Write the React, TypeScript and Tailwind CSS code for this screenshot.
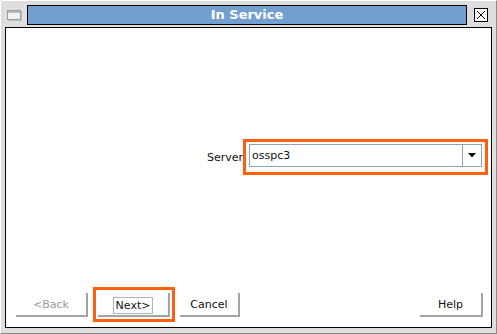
import React from 'react';

const font = { fontFamily: '"DejaVu Sans", sans-serif' };

const WinIcon: React.FC = () => (
  <svg width="15" height="11" viewBox="0 0 15 11">
    <rect x="0.5" y="0.5" width="13" height="9" fill="#f2f2f2" stroke="#9a9a9a" />
    <rect x="1" y="1" width="12" height="2" fill="#b8b8b8" />
    <rect x="1" y="10" width="14" height="1" fill="#c4c4c4" />
    <rect x="14" y="1" width="1" height="10" fill="#c4c4c4" />
  </svg>
);

const Button: React.FC<{ label: string; w: string; disabled?: boolean; focused?: boolean }> = ({ label, w, disabled, focused }) => (
  <div className={`${w} h-[24px] flex items-center justify-center pt-[4px] bg-white border-r-2 border-b-2 border-[#a4a4a4] text-[11px] ${disabled ? 'text-[#9a9a9a]' : 'text-[#111]'}`}>
    {focused ? <span className="px-[2px] leading-[15px] border border-[#a9b6c8]">{label}</span> : label}
  </div>
);

export default function App() {
  return (
    <div style={font} className="w-[497px] h-[334px] bg-[#dedede] border-l border-t border-l-white border-t-white border-r border-b border-r-[#8a8a8a] border-b-[#8a8a8a] flex flex-col overflow-hidden">
      {/* title row */}
      <div className="flex items-center h-[20px] mt-[4px] pl-[6px] pr-[8px]">
        <WinIcon />
        <div className="flex-1 h-[20px] ml-[5px] bg-[#729fcf] border border-black flex items-center justify-center text-white font-bold text-[13px]">
          In Service
        </div>
        <div className="ml-[7px] w-[14px] h-[14px] bg-white border border-black flex items-center justify-center">
          <svg width="10" height="10" viewBox="0 0 10 10">
            <path d="M1 1L9 9M9 1L1 9" stroke="black" strokeWidth="1" />
          </svg>
        </div>
      </div>

      {/* content */}
      <div className="ml-[4px] mt-[2px] w-[487px] h-[301px] bg-white border border-black flex flex-col">
        <div className="flex items-center justify-end pr-[3px] mt-[111px]">
          <span className="text-[11px] text-[#111] pt-[2px]">Server</span>
          <div className="w-[245px] h-[36px] border-[3px] border-[#ff5f0f] px-[3px] pt-[2px]">
            <div className="h-[23px] border border-[#8fa2b6] flex">
              <div className="flex-1 flex items-center pl-[2px] pt-[1px] text-[11px] text-[#111]">osspc3</div>
              <div className="w-[19px] border-l border-[#8fa2b6] flex items-center justify-center">
                <svg width="8" height="5" viewBox="0 0 8 5">
                  <path d="M0 0H8L4 4.5Z" fill="black" />
                </svg>
              </div>
            </div>
          </div>
        </div>

        <div className="flex-1" />

        <div className="flex items-center pl-[10px] pr-[8px] pb-[5px]">
          <Button label="<Back" w="w-[72px]" disabled />
          <div className="ml-[5px] w-[82px] h-[35px] border-[3px] border-[#ff5f0f] px-[2px] flex items-center">
            <Button label="Next>" w="w-[72px]" focused />
          </div>
          <div className="ml-[5px]">
            <Button label="Cancel" w="w-[60px]" />
          </div>
          <div className="flex-1" />
          <Button label="Help" w="w-[63px]" />
        </div>
      </div>
    </div>
  );
}
